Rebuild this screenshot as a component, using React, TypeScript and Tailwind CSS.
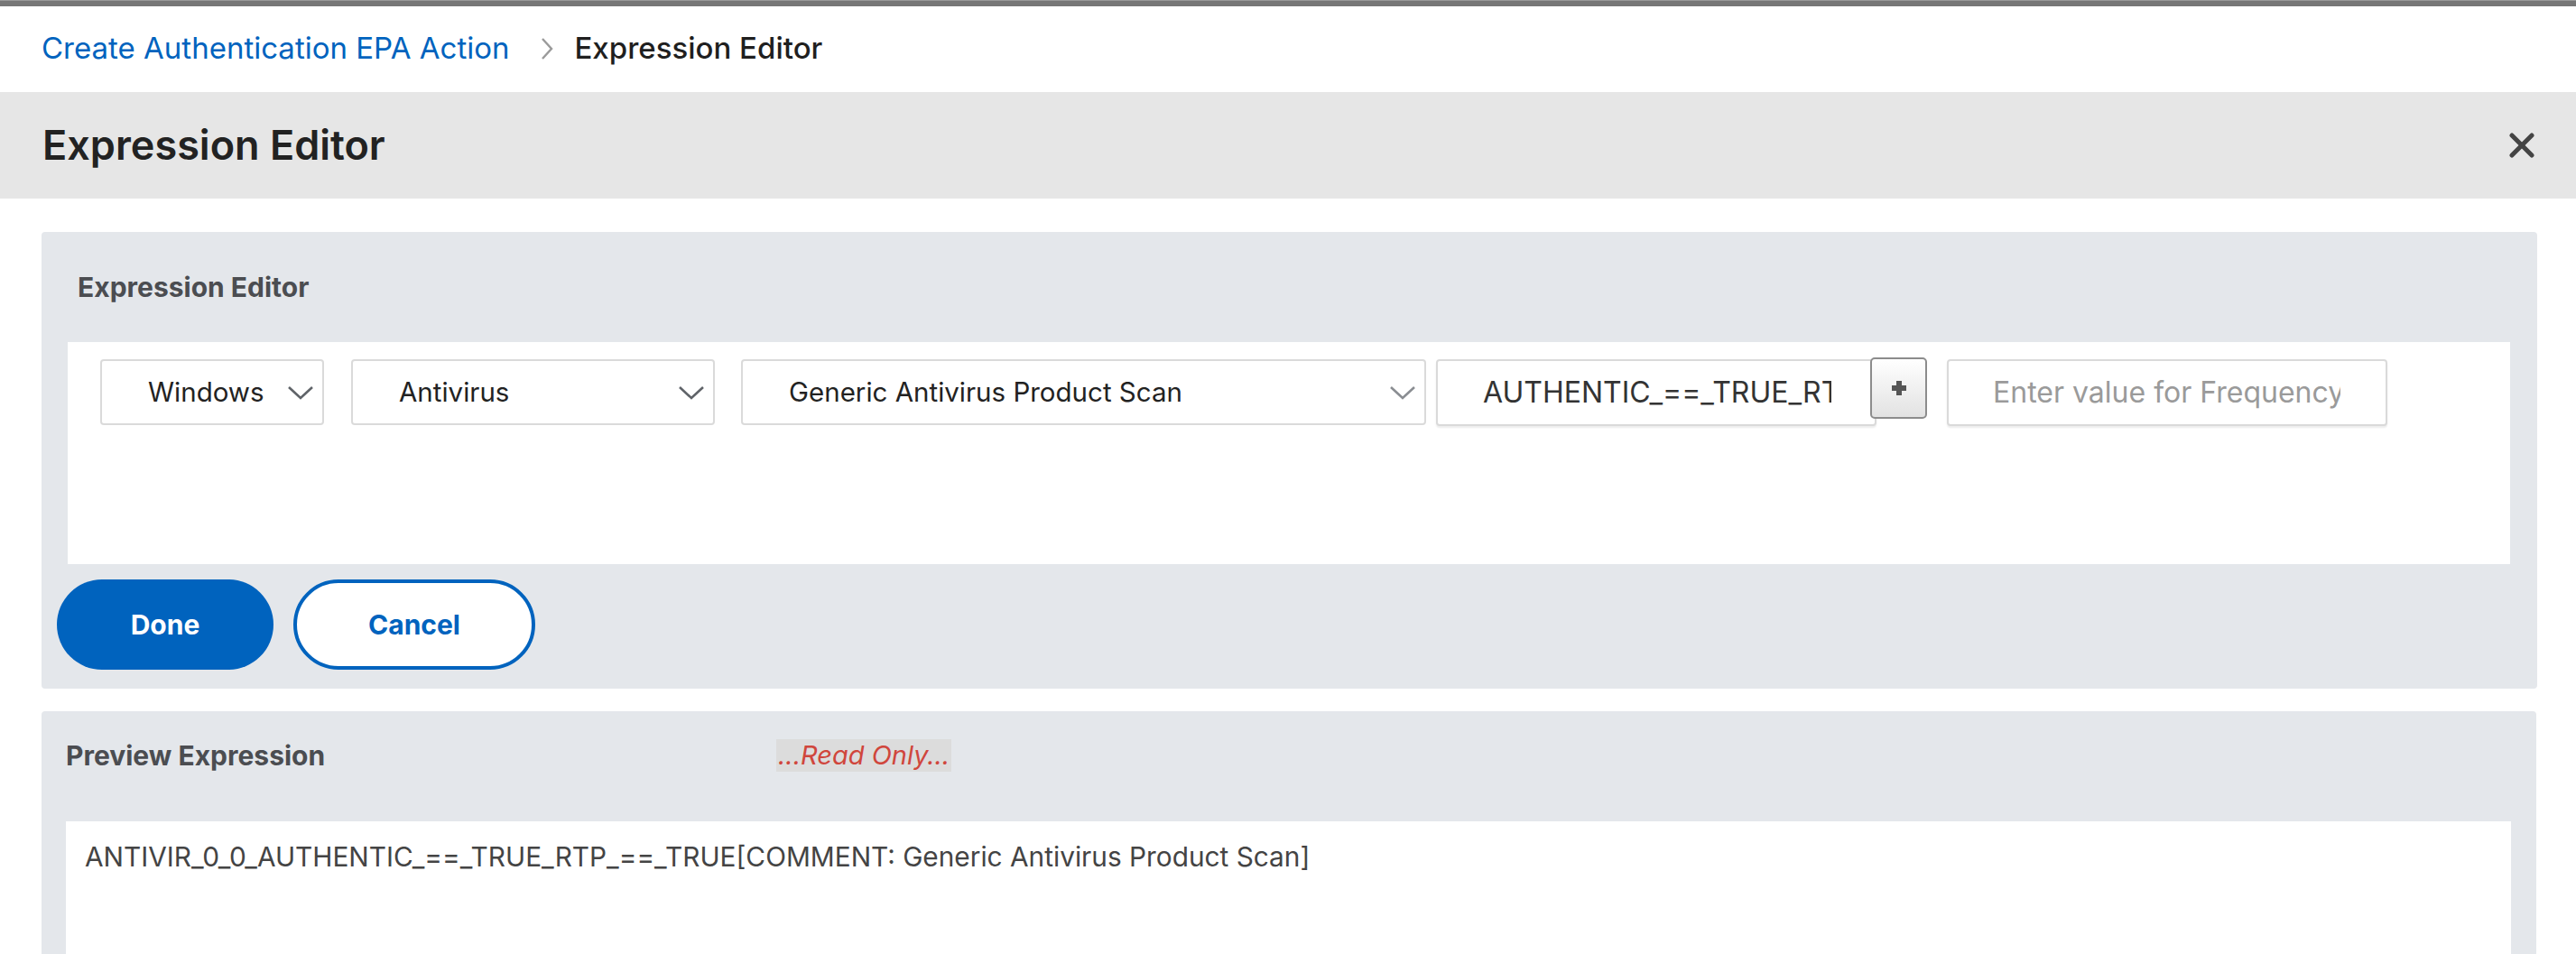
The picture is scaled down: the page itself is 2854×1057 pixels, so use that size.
import React from "react";

const font = { fontFamily: "Inter, 'Liberation Sans', Arial, sans-serif" };

function Chevron({ color = "#666" }: { color?: string }) {
  return (
    <svg width="30" height="16" viewBox="0 0 30 16" fill="none">
      <polyline points="2,2 15,14 28,2" stroke={color} strokeWidth="2.6" />
    </svg>
  );
}

type SelectProps = {
  label: string;
  width: string;
  chevronColor?: string;
};

function FakeSelect({ label, width, chevronColor }: SelectProps) {
  return (
    <div
      className={`${width} h-[73px] shrink-0 flex items-center justify-between rounded-[4px] border-2 border-[#dadada] bg-white pl-[51px] pr-[9px]`}
    >
      <span className="text-[29.5px] text-[#222]">{label}</span>
      <Chevron color={chevronColor} />
    </div>
  );
}

export default function App() {
  return (
    <div className="w-[2854px] h-[1057px] overflow-hidden bg-white" style={font}>
      {/* top strip */}
      <div className="h-[7px] bg-[#777777] border-t border-[#9a9a9a]" />

      {/* breadcrumb */}
      <div className="h-[95px] flex items-center pl-[46px] pb-[2px]">
        <span className="text-[33px] text-[#0063be]">Create Authentication EPA Action</span>
        <svg className="ml-[34px] mr-[22px]" width="16" height="28" viewBox="0 0 16 28" fill="none">
          <polyline points="3,3 13,14 3,25" stroke="#9a9a9a" strokeWidth="2.4" />
        </svg>
        <span className="text-[33px] font-medium text-[#1f1f1f]">Expression Editor</span>
      </div>

      {/* header */}
      <div className="h-[118px] bg-[#e6e6e6] flex items-center justify-between pl-[47px] pr-[46px]">
        <h1 className="text-[45px] font-semibold text-[#222]">Expression Editor</h1>
        <svg width="28" height="28" viewBox="0 0 28 28">
          <line x1="3" y1="3" x2="25" y2="25" stroke="#444" strokeWidth="5" strokeLinecap="round" />
          <line x1="25" y1="3" x2="3" y2="25" stroke="#444" strokeWidth="5" strokeLinecap="round" />
        </svg>
      </div>

      {/* expression editor panel */}
      <div className="ml-[46px] mr-[43px] mt-[37px] bg-[#e4e7eb] rounded-[4px] pb-[21px]">
        <div className="h-[122px] flex items-center pl-[40px]">
          <span className="text-[30px] font-bold text-[#4b4d51]">Expression Editor</span>
        </div>
        <div className="ml-[29px] mr-[30px] h-[246px] bg-white pt-[19px] pl-[36px]">
          <div className="flex items-start">
            <FakeSelect label="Windows" width="w-[248px]" chevronColor="#5f6368" />
            <div className="w-[30px]" />
            <FakeSelect label="Antivirus" width="w-[403px]" chevronColor="#5f6368" />
            <div className="w-[29px]" />
            <FakeSelect label="Generic Antivirus Product Scan" width="w-[759px]" chevronColor="#8a8d92" />
            <div className="w-[11px]" />
            <div className="w-[488px] h-[74px] shrink-0 rounded-[4px] border-2 border-[#dadada] shadow-[0_2px_2px_rgba(0,0,0,0.08)] bg-white pl-[50px] pr-[48px] flex items-center">
              <span className="block w-full text-[32px] text-[#333] whitespace-nowrap overflow-hidden">
                AUTHENTIC_==_TRUE_RTP_==_TRUE
              </span>
            </div>
            <button className="relative -ml-[7px] -mt-[2px] w-[63px] h-[68px] shrink-0 rounded-[5px] border-2 border-[#8c8c8c] bg-gradient-to-b from-white to-[#e2e2e2] flex justify-center pt-[24px]">
              <svg width="16" height="16" viewBox="0 0 16 16">
                <path d="M5 0h6v5h5v6h-5v5H5v-5H0V5h5z" fill="#555" />
              </svg>
            </button>
            <div className="w-[22px]" />
            <div className="w-[488px] h-[74px] shrink-0 rounded-[4px] border-2 border-[#dadada] shadow-[0_2px_2px_rgba(0,0,0,0.08)] bg-white pl-[49px] pr-[50px] flex items-center">
              <span className="block w-full text-[32px] text-[#9a9a9a] whitespace-nowrap overflow-hidden">
                Enter value for Frequency
              </span>
            </div>
          </div>
        </div>
        <div className="flex items-center gap-[22px] pl-[17px] mt-[17px]">
          <button className="w-[240px] h-[100px] rounded-full bg-[#0063be] text-white text-[30px] font-bold">
            Done
          </button>
          <button className="w-[268px] h-[100px] rounded-full bg-white border-[4px] border-[#0063be] text-[#0063be] text-[30px] font-bold">
            Cancel
          </button>
        </div>
      </div>

      {/* preview panel */}
      <div className="ml-[46px] mr-[44px] mt-[25px] bg-[#e4e7eb] rounded-t-[4px] h-[400px]">
        <div className="h-[98px] flex items-center pl-[27px]">
          <span className="w-[787px] text-[30px] font-bold text-[#4b4d51]">Preview Expression</span>
          <span className="h-[36px] flex items-center px-[2px] bg-[#dcdcdc] text-[29px] italic text-[#d0463c]">
            ...Read Only...
          </span>
        </div>
        <div className="mt-[24px] ml-[27px] mr-[28px] h-[300px] bg-white pt-[17px] pl-[21px]">
          <p className="text-[29.8px] text-[#444]">
            ANTIVIR_0_0_AUTHENTIC_==_TRUE_RTP_==_TRUE[COMMENT: Generic Antivirus Product Scan]
          </p>
        </div>
      </div>
    </div>
  );
}
